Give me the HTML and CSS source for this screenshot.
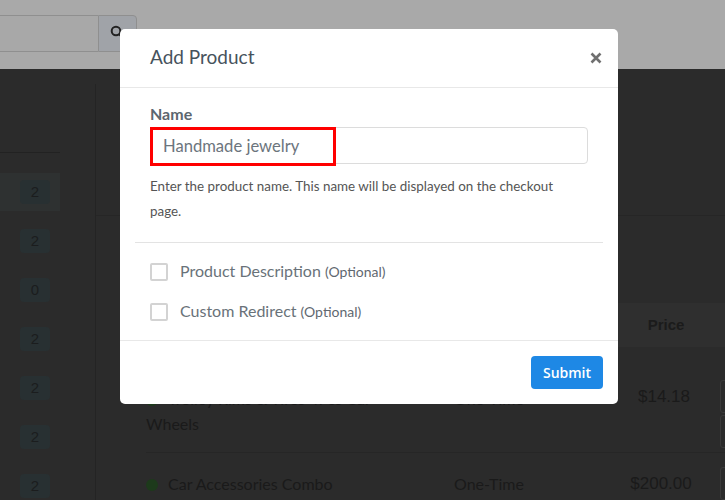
FILE: index.html
```html
<!DOCTYPE html>
<html lang="en">
<head>
    <meta charset="UTF-8">
    <meta name="viewport" content="width=device-width, initial-scale=1.0">
    <title>Add Product</title>
    <link rel="stylesheet" href="styles.css">
</head>
<body>
    <div class="page">
        <header class="topbar">
            <div class="search">
                <input type="text" class="search-input">
                <button class="search-btn">
                    <svg width="15" height="15" viewBox="0 0 15 15"><circle cx="6" cy="6" r="4.3" fill="none" stroke="#222" stroke-width="2"/><path d="M9.2 9.2 L13.5 13.5" stroke="#222" stroke-width="2"/></svg>
                </button>
            </div>
        </header>

        <div class="main">
            <aside class="sidebar">
                <div class="side-top"></div>
                <ul class="side-list">
                    <li class="active"><span class="badge">2</span></li>
                    <li><span class="badge">2</span></li>
                    <li><span class="badge">0</span></li>
                    <li><span class="badge">2</span></li>
                    <li><span class="badge">2</span></li>
                    <li><span class="badge">2</span></li>
                    <li><span class="badge">2</span></li>
                </ul>
            </aside>

            <section class="content">
                <div class="content-head"></div>
                <div class="table">
                    <div class="thead">
                        <div>Product</div>
                        <div>Type</div>
                        <div class="price">Price</div>
                        <div></div>
                    </div>
                    <div class="row">
                        <div class="name"><span class="dot"></span>Trolley Rims &amp; Tires 4Pcs Car<br>Wheels</div>
                        <div class="type">One-Time</div>
                        <div class="price">$14.18</div>
                        <div class="actions"><span class="act"></span><span class="act"></span></div>
                    </div>
                    <div class="row">
                        <div class="name"><span class="dot"></span>Car Accessories Combo</div>
                        <div class="type">One-Time</div>
                        <div class="price">$200.00</div>
                        <div class="actions"><span class="act"></span></div>
                    </div>
                </div>
            </section>
        </div>
    </div>

    <!-- 弹窗 -->
    <div class="modal">
        <div class="modal-header">
            <h4 class="modal-title">Add Product</h4>
            <button class="close">
                <svg width="12" height="12" viewBox="0 0 12 12"><path d="M1.5 1.5 L10.5 10.5 M10.5 1.5 L1.5 10.5" stroke="#707070" stroke-width="2.6"/></svg>
            </button>
        </div>
        <div class="modal-body">
            <label class="field-label">Name</label>
            <div class="field">
                <input type="text" class="field-input" value="Handmade jewelry">
                <span class="highlight"></span>
            </div>
            <p class="help">Enter the product name. This name will be displayed on the checkout<br>page.</p>
            <hr class="divider">
            <label class="check"><span class="box"></span>Product Description <small>(Optional)</small></label>
            <label class="check"><span class="box"></span>Custom Redirect <small>(Optional)</small></label>
        </div>
        <div class="modal-footer">
            <button class="btn-submit">Submit</button>
        </div>
    </div>
</body>
</html>
```

FILE: styles.css
```css
body {
    margin: 0;
    width: 725px;
    height: 500px;
    overflow: hidden;
    background-color: #2b2b2b;
    font-family: Lato, "Open Sans", sans-serif;
}

.page {
    height: 500px;
    overflow: hidden;
}

/* 顶部栏 */
.topbar {
    height: 69px;
    background-color: #a9a9a9;
    box-sizing: border-box;
    padding-top: 15px;
}

.search {
    display: flex;
    height: 37px;
}

.search-input {
    width: 99px;
    height: 37px;
    margin-left: -1px;
    box-sizing: border-box;
    background-color: #a8a8a8;
    border: 1px solid #8f8f8f;
    border-right: none;
    outline: none;
}

.search-btn {
    width: 39px;
    height: 37px;
    padding: 0 0 0 11px;
    text-align: left;
    background-color: #a0a3a8;
    border: 1px solid #8f8f8f;
    border-radius: 0 4px 4px 0;
}

/* 主体 */
.main {
    display: flex;
    height: 431px;
}

.sidebar {
    width: 95px;
    margin-top: 15px;
    border-right: 1px solid #242424;
    flex-shrink: 0;
}

.side-top {
    width: 60px;
    height: 68px;
    border-bottom: 1px solid #222;
}

.side-list {
    margin: 20px 0 0;
    padding: 0;
    list-style: none;
}

.side-list li {
    display: flex;
    align-items: center;
    width: 60px;
    height: 38px;
    margin-bottom: 11px;
}

.side-list li.active {
    background-color: #2e3131;
}

.badge {
    width: 30px;
    height: 24px;
    margin-left: 20px;
    line-height: 24px;
    text-align: center;
    font-family: "Liberation Sans", Arial, sans-serif;
    font-size: 15px;
    color: #1b1d1e;
    background-color: #283032;
    border-radius: 4px;
}

.content {
    flex: 1;
    padding-left: 40px;
}

.content-head {
    height: 146px;
    border-bottom: 1px solid #262626;
    margin-left: -40px;
}

.table {
    margin-top: 87px;
    color: #1a1a1a;
}

.thead,
.row {
    display: grid;
    grid-template-columns: 318px 160px 100px 60px;
}

.thead {
    height: 44px;
    line-height: 44px;
    background-color: #2f2f2f;
    font-family: "Liberation Sans", Arial, sans-serif;
    font-weight: bold;
    font-size: 15px;
    color: #1b1b1b;
}

.thead > div:not(.price) {
    visibility: hidden;
}

.thead .price {
    text-align: center;
    padding-left: 4px;
}

.row {
    margin-left: 10px;
    grid-template-columns: 308px 160px 100px 60px;
    font-size: 16px;
    line-height: 25px;
    border-bottom: 1px solid #262626;
}

.row:nth-child(2) {
    padding: 39px 0 16px;
}

.row:nth-child(2) .price {
    margin-top: -2px;
}

.row:nth-child(3) {
    padding: 18px 0 16px;
}

.row .price {
    text-align: center;
    font-family: "Liberation Sans", Arial, sans-serif;
    font-size: 17px;
}

.row:nth-child(3) .price {
    padding-right: 6px;
}

.dot {
    display: inline-block;
    width: 12px;
    height: 12px;
    margin-right: 10px;
    border-radius: 50%;
    background-color: #1d3a1b;
    vertical-align: -1px;
}

.actions {
    display: flex;
    flex-direction: column;
    gap: 2px;
    height: 0;
    padding-left: 6px;
    margin-top: -4px;
}

.row:nth-child(2) .actions {
    margin-top: -6px;
}

.act {
    display: block;
    flex-shrink: 0;
    width: 40px;
    height: 31px;
    border: 1px solid #3a3a3a;
    border-radius: 3px;
}

/* 弹窗 */
.modal {
    position: absolute;
    top: 29px;
    left: 120px;
    width: 498px;
    background-color: #fff;
    border-radius: 5px;
}

.modal-header {
    display: flex;
    align-items: center;
    justify-content: space-between;
    height: 59px;
    box-sizing: border-box;
    padding: 0 16px 4px 30px;
    border-bottom: 1px solid #e8e8e8;
}

.modal-title {
    margin: 0;
    font-size: 19px;
    font-weight: normal;
    color: #46525c;
}

.close {
    padding: 0;
    margin-top: 6px;
    background: none;
    border: none;
}

.modal-body {
    padding: 16px 30px 19px;
}

.field-label {
    display: block;
    height: 20px;
    line-height: 20px;
    font-size: 16px;
    font-weight: bold;
    color: #5c666f;
}

.field {
    position: relative;
    margin-top: 3px;
}

.field-input {
    display: block;
    width: 100%;
    height: 37px;
    box-sizing: border-box;
    padding: 0 12px;
    font-family: Lato, sans-serif;
    font-size: 16.6px;
    color: #6c757d;
    border: 1px solid #dcdcdc;
    border-radius: 4px;
}

.field .highlight {
    position: absolute;
    top: 0;
    left: 0;
    width: 186px;
    height: 39px;
    box-sizing: border-box;
    border: 3px solid #f00;
}

.help {
    margin: 10px 0 0;
    line-height: 25px;
    font-size: 13.4px;
    color: #555;
}

.divider {
    margin: 18px -15px 0;
    border: none;
    border-top: 1px solid #e3e3e3;
}

.check {
    display: block;
    height: 20px;
    line-height: 20px;
    margin-top: 18px;
    font-size: 16px;
    color: #697279;
}

.check + .check {
    margin-top: 20px;
}

.check .box {
    display: inline-block;
    width: 18px;
    height: 18px;
    box-sizing: border-box;
    margin-right: 12px;
    border: 2px solid #d3d3d3;
    border-radius: 2px;
    vertical-align: -4px;
}

.check small {
    font-size: 14px;
    color: #5f6870;
}

.modal-footer {
    display: flex;
    justify-content: flex-end;
    padding: 15px;
    border-top: 1px solid #e8e8e8;
}

.btn-submit {
    width: 72px;
    height: 33px;
    padding: 0;
    font-family: "Open Sans", sans-serif;
    font-size: 14px;
    font-weight: 600;
    color: #fff;
    background-color: #1e88e5;
    border: none;
    border-radius: 4px;
}
```
